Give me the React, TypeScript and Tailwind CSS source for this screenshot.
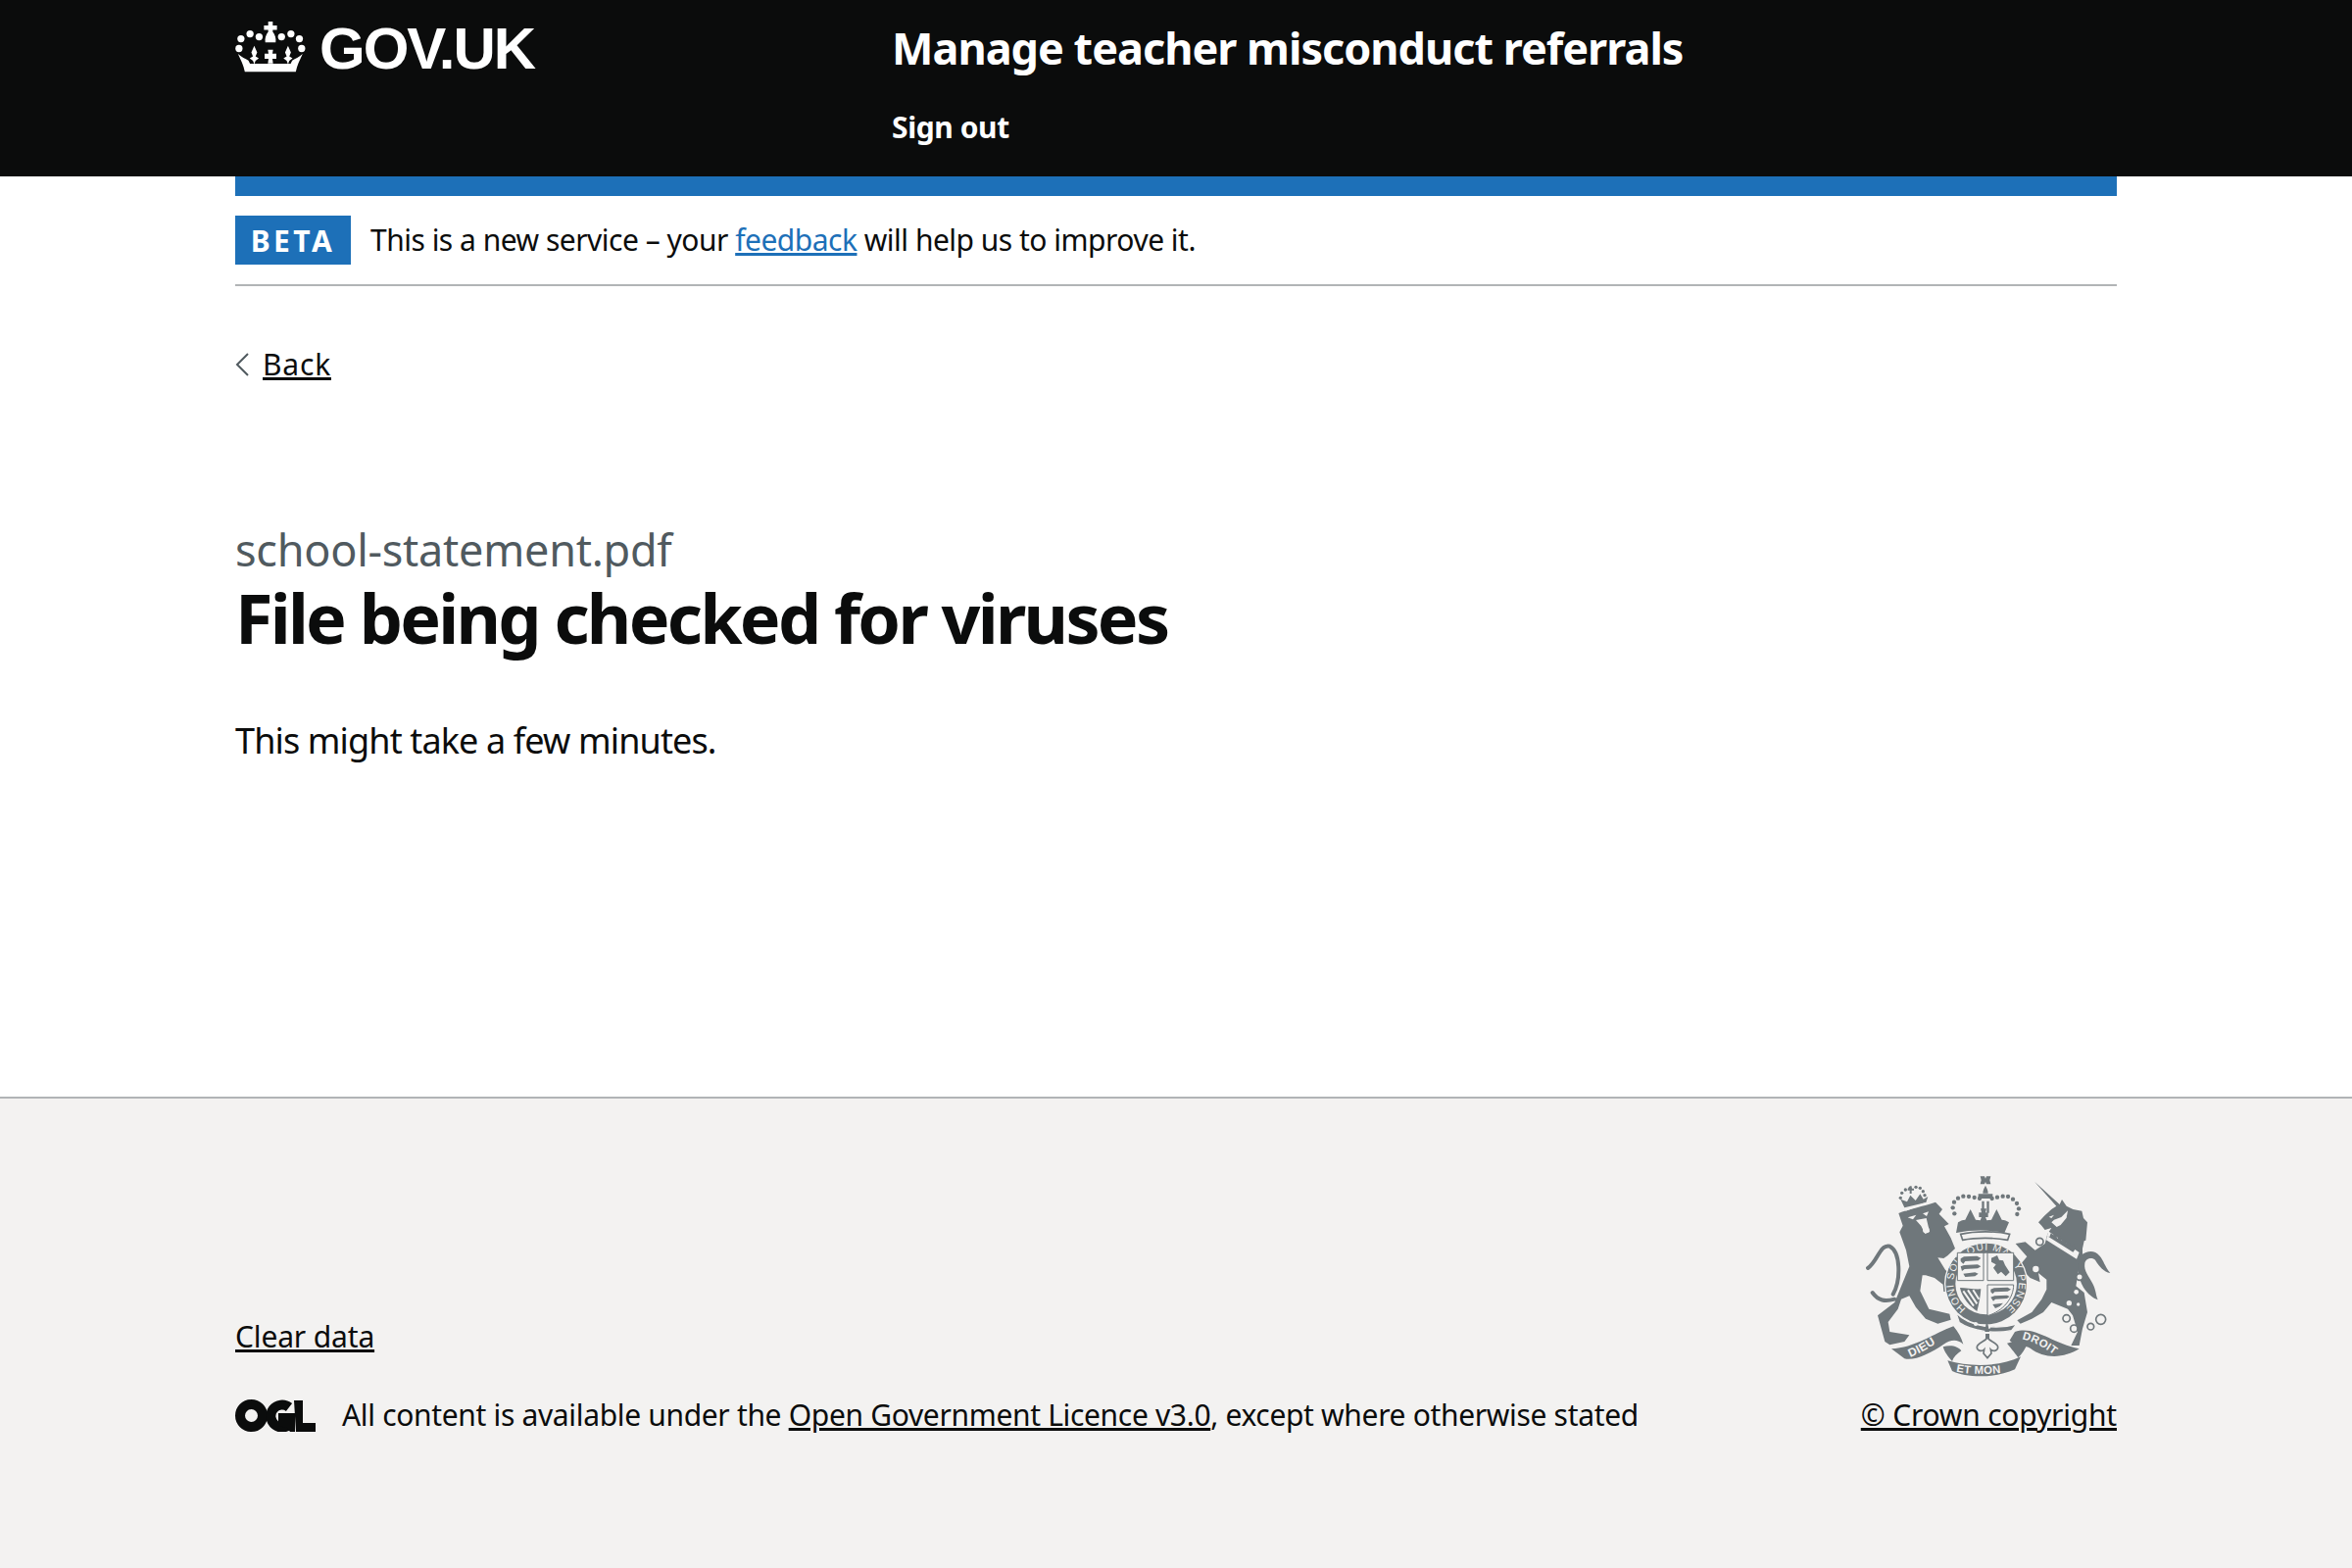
import React from "react";

const font = { fontFamily: '"Noto Sans", Arial, sans-serif' };

function CrownLogo() {
  const dots: [number, number, number][] = [
    [71, 148, 11],
    [77, 118, 11],
    [105, 103, 11],
    [133, 112, 11],
    [202, 112, 11],
    [231, 103, 11],
    [257, 118, 11],
    [264, 148, 11],
  ];
  return (
    <svg viewBox="60 62 216 160" className="h-[53px] w-[72px] shrink-0" fill="#fff" aria-hidden="true">
      {dots.map(([cx, cy, r]) => (
        <circle key={`${cx}-${cy}`} cx={cx} cy={cy} r={r} />
      ))}
      <path d="M161 65h14v12h13v14h-13v6c7 9 11 20 9 32h-32c-2-12 2-23 9-32v-6h-13V77h13z" />
      <path d="M68 165c12 10 22 15 32 20l5 10h125l5-10c10-5 20-10 32-20-9 20-17 35-21 55H89c-4-20-12-35-21-55z" />
      <path d="M118 140l9 20-5 12 10 6-10 8-4 10-4-10-10-8 10-6-5-12z" />
      <path d="M222 140l9 20-5 12 10 6-10 8-4 10-4-10-10-8 10-6-5-12z" />
      <path d="M160 152h16l-2 12h12v16h-12l2 14h-16l2-14h-12v-16h12z" />
    </svg>
  );
}

function OglLogo() {
  return (
    <svg viewBox="0 0 82 33" className="h-[33px] w-[82px] shrink-0" aria-hidden="true">
      <circle cx="16.5" cy="16.5" r="11.5" fill="none" stroke="#0b0c0c" strokeWidth="10" />
      <path d="M55 8a11.5 11.5 0 1 0 2 16" fill="none" stroke="#0b0c0c" strokeWidth="10" />
      <path d="M44 14h17v19h-5l-3-4-9-2z" fill="#0b0c0c" />
      <path d="M60 1h9v23h13v9H62z" fill="#0b0c0c" />
    </svg>
  );
}

function Crest() {
  const c = "#6f777b";
  const bg = "#f3f2f1";
  const crownDots: [number, number][] = [
    [343, 178], [338, 160], [342, 143], [354, 131], [370, 125], [387, 126], [404, 129], [420, 132],
    [458, 132], [474, 128], [491, 125], [507, 126], [522, 134], [534, 147], [540, 163], [535, 180],
  ];
  const lionDots: [number, number][] = [[178, 130], [182, 115], [193, 105], [207, 100], [225, 97], [238, 100], [247, 110], [252, 122]];
  const rings: [number, number, number][] = [[604, 264, 11], [592, 348, 12], [726, 372, 10], [686, 499, 11], [709, 530, 11], [760, 524, 10], [791, 502, 15]];
  return (
    <svg viewBox="60 45 780 660" className="h-[220px] w-[260px]" aria-hidden="true">
      <defs>
        <path id="garter" d="M378.400 468.800A100 100 0 1 1 501.600 468.800" />
        <path id="dieu" d="M208 618C240 605 280 582 314 555" />
        <path id="droit" d="M550 562C590 570 630 595 662 622" />
        <path id="etmon" d="M348 662C400 672 480 672 530 656" />
      </defs>

      {/* lion */}
      <path d="M172 177C200 165 250 155 285 143L306 165 296 179 326 210 312 217 332 253 345 285 322 307 310 315 292 313 315 350 335 370 345 400 328 405 335 417 310 417 308 395 282 375 255 367 245 367 238 415 265 470 328 485 332 503 292 515 255 500 225 465 205 430 180 440 170 470 140 510 145 540 205 550 190 570 145 580 130 570 108 490 160 450 205 340 195 290 175 235 185 215z" fill={c} />
      <path d="M160 440C130 448 110 445 92 420M155 425C180 380 178 295 145 278 115 270 108 325 78 345" fill="none" stroke={c} strokeWidth="12" strokeLinecap="round" />
      <path d="M200 190l26-8-10 14zM246 178l18-6-6 14zM225 198l32-6 10 42-14 6-12-24z" fill={bg} />
      <circle cx="256" cy="228" r="10" fill={bg} />
      {/* lion crown */}
      <path d="M190 160l-12-26 20 8 10-20 16 16 14-20 10 16 14-8-6 18z" fill={c} />
      <path d="M193 168l62-22" stroke={bg} strokeWidth="4" />
      {lionDots.map(([x, y]) => (
        <circle key={`${x}-${y}`} cx={x} cy={y} r="5" fill={c} />
      ))}
      <path d="M200 101h6v-7h6v7h7v6h-7v10h-6v-10h-6z" fill={c} />

      {/* unicorn */}
      <path d="M588 80L665 150 672 135 686 155 706 165 733 170 738 192 750 205 745 260 740 262 735 285 735 310 725 340 715 400 740 420 750 480 735 530 725 582 700 582 720 540 705 490 690 470 640 450 615 480 580 500 545 515 535 505 580 480 610 440 625 410 625 380 600 360 605 388 575 375 540 340 565 310 530 270 560 265 590 290 620 270 628 240 640 222 620 228 610 215 600 205 618 185 640 165 655 155z" fill={c} />
      <path d="M630 232l95 65-8 20-93-58z" fill={bg} />
      <path d="M634 250l4-12 8 6 6-4 6 14 8-6 6 14 8-6 6 14 8-6 6 14 8-6 6 14-8 10-80-50z" fill={c} />
      <path d="M640 205l8-8 22-8 20-20-4 22-18 22-12 6zM632 188l16-6-8 10z" fill={bg} />
      <path d="M686 210c4-8 4-20 0-28 8 6 10 22 0 28z" fill={c} />
      <path d="M730 306c20-14 40-18 58 2 12 14 14 30 32 52-20-4-34-20-46-40-10-10-30-4-32 10-4 24 14 42 24 62 10 18 10 36 16 50-14-6-30-16-44-38-16-28-26-70-8-98z" fill={c} />
      {rings.map(([x, y, r]) => (
        <circle key={`${x}-${y}`} cx={x} cy={y} r={r} fill={bg} stroke={c} strokeWidth="5" />
      ))}
      {[[716, 418, 7], [694, 452, 8], [722, 456, 5]].map(([x, y, r]) => (
        <circle key={`${x}-${y}`} cx={x} cy={y} r={r} fill={bg} />
      ))}

      {/* royal crown */}
      {crownDots.map(([x, y]) => (
        <circle key={`${x}-${y}`} cx={x} cy={y} r="6.500" fill={c} />
      ))}
      <path d="M422 64h13l3 7 3-7h13l-3 12 3 12h-13l-3-7-3 7h-13l3-12z" fill={c} />
      <path d="M416 118h44v14h-44zM427 140h7v36h-7zM442 140h7v36h-7zM438 92c4 8 8 14 8 24h-16c0-10 4-16 8-24z" fill={c} />
      <path d="M354 205l12-6 10-2 16-32 16 32 14 2 4-10h-8v-14h8l-3-12h18l-3 12h8v14h-8l4 10 14-2 16-32 16 32 10 2 12 6-14 32c-48-10-100-10-148 0z" fill={c} />
      <path d="M362 241c44-10 108-10 150 0l-6 18c-40-8-98-8-138 0z" fill={bg} stroke={c} strokeWidth="5" />

      {/* garter and shield */}
      <circle cx="440" cy="393" r="128" fill={bg} />
      <circle cx="440" cy="393" r="124" fill={c} />
      <circle cx="440" cy="393" r="94" fill={bg} />
      <text fontFamily="Liberation Sans, sans-serif" fontSize="31" fill={bg} letterSpacing="2.500">
        <textPath href="#garter">HONI SOIT QUI MAL Y PENSE</textPath>
      </text>
      <path d="M352 298h80v85h-80zM444 298h80v85h-80zM444 396h80c0 40-30 80-80 95z" fill={bg} stroke={c} strokeWidth="3" />
      <path d="M362 316l10-6 40-2 12 6-8 8-40 2-6 8-8-8zM362 340l10-4 42-2 10 6-10 6-40 2-8 6zM370 362l36-4 10 4-10 8-30 2z" fill={c} />
      <path d="M456 314l18-8 6 14 12 2 6 14 14 22-12 12-14-14-10 8-14-20 8-10-14-8z" fill={c} />
      <path d="M454 410l10-4 42-2 10 6-10 6-40 2-6 6-6-6zM454 434l12-4 38-2 8 4-8 6-36 2-6 6zM460 456l32-4-10 10-14 6z" fill={c} />
      <path d="M360 405c18 0 46 6 64 4-2 26-6 46-12 68-20-14-46-40-52-72z" fill={c} />
      <path d="M370 415l32 46M384 412l28 42M400 412l18 28" stroke={bg} strokeWidth="6" />
      <path d="M348 482c40 44 126 52 186 34l-16 20c-50 10-120 4-160-24z" fill={c} stroke={bg} strokeWidth="4" />
      <circle cx="408" cy="516" r="6" fill={bg} />
      <circle cx="448" cy="525" r="6" fill={bg} />
      <path d="M442 500l-6 40h14z" fill={c} />

      {/* motto scroll */}
      <path d="M150 592C220 590 280 545 340 523 355 540 365 560 370 578 350 560 330 565 310 578 270 605 220 630 190 622z" fill={c} />
      <path d="M528 540C590 520 640 575 725 592 680 620 620 625 575 590 555 578 535 590 512 566z" fill={c} />
      <path d="M308 586c22-8 48-2 56 12-14 10-24 20-28 32-12-12-24-30-28-44zM566 575c-6 18-16 32-28 44-6-10-20-26-34-44 18-6 46-10 62 0z" fill={c} />
      <path d="M322 628C390 648 480 648 546 616L528 655C470 682 382 682 336 660z" fill={c} />
      <path d="M438 546h12v18h-12z" fill={c} />
      <path d="M444 558c-8 12-30 16-32 28-1 12 14 16 22 8l-2 12 12 14 12-14-2-12c8 8 23 4 22-8-2-12-24-16-32-28z" fill={bg} stroke={c} strokeWidth="5" />
      <text fontFamily="Liberation Sans, sans-serif" fontWeight="700" fontSize="36" fill={bg} letterSpacing="1">
        <textPath href="#dieu">DIEU</textPath>
      </text>
      <text fontFamily="Liberation Sans, sans-serif" fontWeight="700" fontSize="34" fill={bg} letterSpacing="1">
        <textPath href="#droit">DROIT</textPath>
      </text>
      <text fontFamily="Liberation Sans, sans-serif" fontWeight="700" fontSize="34" fill={bg} letterSpacing="1">
        <textPath href="#etmon">ET MON</textPath>
      </text>
    </svg>
  );
}

export default function App() {
  return (
    <div className="flex min-h-[1600px] flex-col bg-white text-[#0b0c0c]" style={font}>
      <header className="flex h-[180px] bg-[#0b0c0c] px-[240px] text-white">
        <a className="flex w-[670px] items-start gap-[14px] pt-[21px]">
          <CrownLogo />
          <span className="pt-[3px] text-[60px] leading-[52px] font-bold tracking-[-2px]" style={{ fontFamily: '"Liberation Sans", sans-serif' }}>GOV.UK</span>
        </a>
        <div className="flex flex-col pt-[24px]">
          <span className="text-[45px] leading-[50px] font-bold tracking-[-1px]">Manage teacher misconduct referrals</span>
          <span className="mt-[35px] text-[30px] leading-[42px] font-bold tracking-[-0.4px]">Sign out</span>
        </div>
      </header>

      <main className="flex flex-1 flex-col px-[240px]">
        <div className="h-[20px] bg-[#1d70b8]" />
        <div className="flex items-center gap-[20px] border-b-2 border-[#b1b4b6] py-[20px]">
          <strong className="flex h-[50px] w-[118px] items-center justify-center bg-[#1d70b8] text-[30px] font-bold tracking-[3.5px] text-white">BETA</strong>
          <p className="text-[30px] leading-[50px] tracking-[-0.5px]">
            This is a new service – your <a className="text-[#1d70b8] underline">feedback</a> will help us to improve it.
          </p>
        </div>

        <a className="mt-[60px] flex items-center gap-[14px] self-start text-[30px] leading-[40px]">
          <svg viewBox="0 0 14 24" className="h-[24px] w-[14px]" fill="none" stroke="#505a5f" strokeWidth="2"><path d="M13 1L2 12l11 11" /></svg>
          <span className="tracking-[0.8px] underline">Back</span>
        </a>

        <span className="mt-[142px] text-[45px] leading-[53px] tracking-[-0.25px] text-[#505a5f]">school-statement.pdf</span>
        <h1 className="text-[70px] leading-[86px] font-bold tracking-[-2.7px]">File being checked for viruses</h1>
        <p className="mt-[58px] text-[36px] leading-[50px] tracking-[-0.87px]">This might take a few minutes.</p>
      </main>

      <footer className="h-[481px] border-t-2 border-[#b1b4b6] bg-[#f3f2f1] px-[240px] pt-[73px]">
        <div className="flex items-end justify-between">
          <div className="flex flex-col">
            <a className="self-start text-[30px] leading-[40px] tracking-[-0.15px] underline">Clear data</a>
            <div className="mt-[40px] flex items-center gap-[27px]">
              <OglLogo />
              <span className="text-[30px] leading-[40px] tracking-[-0.33px]">
                All content is available under the <a className="underline">Open Government Licence v3.0</a>, except where otherwise stated
              </span>
            </div>
          </div>
          <div className="flex flex-col items-end">
            <Crest />
            <a className="mt-[10px] text-[30px] leading-[40px] tracking-[-0.2px] underline">© Crown copyright</a>
          </div>
        </div>
      </footer>
    </div>
  );
}
